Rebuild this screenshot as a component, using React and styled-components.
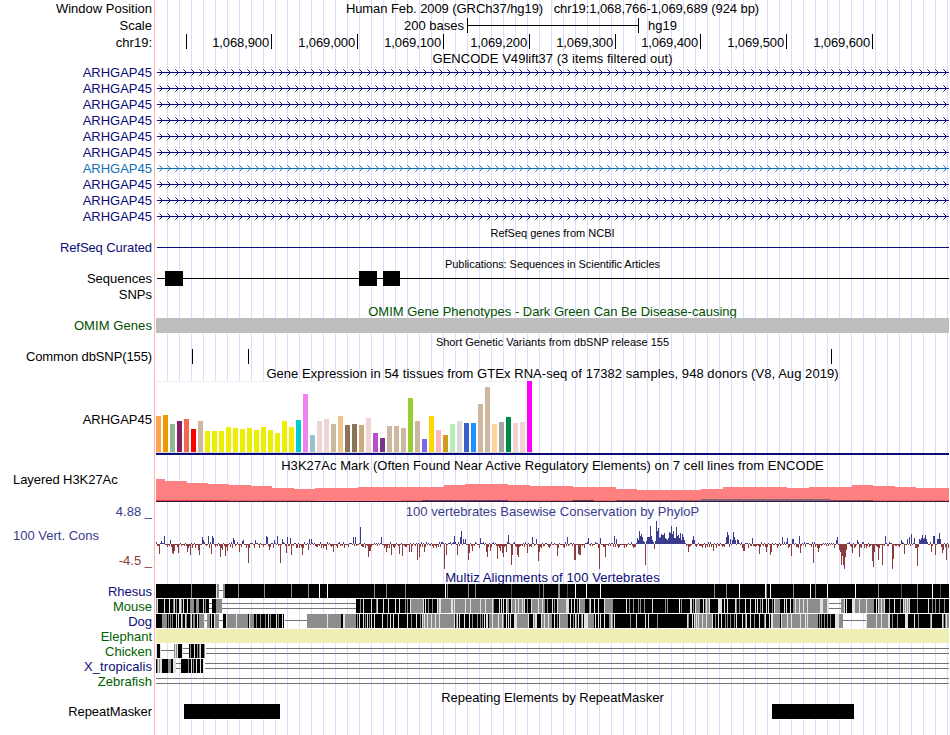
import React from "react";
import styled, { createGlobalStyle } from "styled-components";

const colors = {
    text: "#000",
    navy: "#0c0c78",
    blue: "#1470b4",
    green: "#005000",
    species: "#006000",
    up: "#3c3c8c",
    down: "#8c3c3c",
    clipped: "#ff00ff",
    gap: "#737373",
};

//first base of the window sits at this pixel, every plot starts here
const X0 = 156;
const PLOT_WIDTH = 793;

const GlobalStyle = createGlobalStyle`
    body {
        margin: 0;
        background: #fff;
        overflow: hidden;
    }
`;

const Browser = styled.main`
    width: 949px;
    height: 735px;
    overflow: hidden;
    font-family: "Liberation Sans", Arial, Helvetica, sans-serif;
    font-size: 13px;
    background-image:
        linear-gradient(#ffb4b4, #ffb4b4),
        repeating-linear-gradient(to right, transparent 0 11px, #dcdcff 11px 12px);
    background-size: 1px 100%, 793px 100%;
    background-position: 154px 0, 156px 0;
    background-repeat: no-repeat;
`;

const Row = styled.div`
    display: grid;
    grid-template-columns: 152px ${PLOT_WIDTH}px;
    column-gap: 4px;
    height: ${props=>props.$height}px;
`;

const Label = styled.div`
    display: flex;
    flex-direction: column;
    justify-content: ${props=>props.$top === undefined ? "center" : "flex-start"};
    align-items: ${props=>props.$left ? "flex-start" : "flex-end"};
    padding-top: ${props=>props.$top || (props.$low ? 2 : 0)}px;
    padding-left: ${props=>props.$left ? 13 : 0}px;
    box-sizing: border-box;
    height: ${props=>props.$height}px;
    line-height: 16px;
    color: ${props=>props.$color || colors.text};
    letter-spacing: ${props=>props.$spacing || 0}px;
    white-space: nowrap;
`;

const Title = styled.div`
    display: flex;
    justify-content: center;
    align-items: center;
    box-sizing: border-box;
    padding-top: ${({$drop = 1})=>$drop}px;
    line-height: 16px;
    font-size: ${props=>props.$small ? 11 : 13}px;
    color: ${props=>props.$color || colors.text};
    letter-spacing: ${props=>props.$spacing || 0}px;
    white-space: pre;
`;

const Plot = styled.svg`
    display: block;
    width: ${PLOT_WIDTH}px;
    height: ${props=>props.$height}px;
    shape-rendering: crispEdges;
`;

const Limit = styled.span`
    align-self: flex-end;
    margin-top: ${props=>props.$gap}px;
    color: ${colors.down};
`;

const ScaleBar = styled.div`
    display: flex;
    align-items: center;
    padding-left: 248px;
`;

const ScaleLine = styled.span`
    width: 170px;
    height: 15px;
    margin: 0 9px 1px 3px;
    border: solid #000;
    border-width: 0 1px;
    background: linear-gradient(#000, #000) 0 7px / 100% 1px no-repeat;
`;

const Ruler = styled.div`
    display: flex;
`;

const Tick = styled.span`
    box-sizing: border-box;
    width: ${props=>props.$width}px;
    height: 15px;
    padding-right: 2px;
    border-right: 1px solid #000;
    line-height: 17px;
    text-align: right;
    letter-spacing: -0.12px;
`;

const Elephant = styled.div`
    height: 14px;
    background: #f0f0b4;
`;

const OmimBar = styled.div`
    height: 15px;
    background: #bebebe;
`;

const genes = [0, 1, 2, 3, 4, 5, 6, 7, 8, 9].map(i=>i === 6 ? colors.blue : colors.navy);

const ticks = [[186, ""], [271, "1,068,900"], [357, "1,069,000"], [443, "1,069,100"], [529, "1,069,200"],
    [615, "1,069,300"], [700, "1,069,400"], [786, "1,069,500"], [872, "1,069,600"]];

const yellow = (heights)=>heights.map(h=>[h, "#eeee00"]);

const tissues = [
    [36, "#ffa54f"], [37, "#ee9a00"], [28, "#8fbc8f"], [31, "#8b1c62"], [33, "#ee6a50"], [23, "#ff0000"], [31, "#cdb79e"],
    ...yellow([21, 21, 21, 25, 24, 23, 24, 22, 25, 22, 19, 31, 25]),
    [32, "#00cdcd"], [58, "#ee82ee"], [17, "#9ac0cd"], [31, "#eed5d2"], [33, "#eed5d2"], [28, "#cdb79e"], [36, "#eec591"],
    [27, "#8b7355"], [28, "#8b7355"], [27, "#cdaa7d"], [34, "#eed5d2"], [19, "#b452cd"], [14, "#7a378b"],
    [26, "#cdb79e"], [26, "#cdb79e"], [24, "#cdb79e"], [54, "#9acd32"], [31, "#cdb79e"], [13, "#7a67ee"],
    [36, "#ffd700"], [22, "#ffb6c1"], [17, "#cd9b1d"], [28, "#b4eeb4"], [31, "#d9d9d9"], [29, "#3a5fcd"],
    [29, "#1e90ff"], [48, "#cdb79e"], [65, "#cdb79e"], [28, "#ffd39b"], [30, "#a6a6a6"], [35, "#008b45"],
    [29, "#eed5d2"], [30, "#eed5d2"], [71, "#ff00ff"],
];

//[start, top] of each signal step
const h3k27ac = [[156, 479], [165, 481], [187, 483], [208, 484], [229, 485], [251, 486], [272, 488], [294, 489],
    [315, 488], [358, 487], [444, 485], [465, 484], [508, 485], [530, 486], [573, 487], [616, 489], [637, 490],
    [701, 489], [723, 487], [787, 488], [809, 487], [852, 485], [873, 486], [895, 487], [916, 488]];

//[start, end, top, color] of the weaker cell lines at the foot of the signal
const weakSignals = [[156, 229, 500, "#e63c46"], [229, 315, 500, "#f5695a"], [401, 422, 500, "#f5695a"],
    [422, 508, 500, "#6e3c6e"], [508, 573, 500, "#f5695a"], [573, 594, 500, "#5a3c3c"], [594, 616, 500, "#f5695a"],
    [616, 680, 500, "#7d4b46"], [680, 701, 500, "#a05a5a"], [701, 830, 499, "#80647d"], [830, 873, 500, "#7d4b46"],
    [873, 949, 500, "#f5695a"]];

const peaks = {
    159: -10, 161: 3, 164: 8, 170: 4, 172: -9, 173: -10, 174: -7, 178: -9, 187: -8, 190: -11, 198: -6, 199: -11,
    202: 7, 203: 4, 208: 8, 211: -10, 212: 8, 213: 6, 220: -13, 222: -6, 225: -12, 227: -7, 233: 6, 234: 4, 239: -8,
    242: 3, 243: 4, 248: -19, 255: 4, 266: 8, 267: 7, 269: -6, 274: 4, 277: 8, 280: -19, 282: 5, 286: -9, 287: 7,
    290: 6, 291: -11, 302: -11, 308: -6, 309: 5, 311: 5, 326: -6, 333: -8, 353: 7, 355: 7, 360: 17, 368: -13,
    369: -7, 370: -7, 381: 7, 386: -8, 391: -11, 399: -10, 402: -12, 409: -8, 411: -8, 417: -16, 419: -13, 424: -8,
    444: -25, 446: -11, 454: 8, 457: -11, 460: 7, 461: 13, 463: 5, 465: 5, 468: -16, 469: -9, 472: -7, 480: 6,
    486: -8, 487: -13, 490: -7, 497: -15, 500: -7, 502: -9, 503: -13, 506: -8, 508: 9, 511: -21, 512: -11, 517: -11,
    518: -13, 527: -9, 532: 7, 536: 5, 538: -17, 539: -8, 557: -12, 567: 7, 574: -16, 575: -16, 578: -10, 579: -11,
    580: -11, 588: 6, 599: -25, 600: 6, 605: -13, 614: 8, 616: 5, 637: 6, 638: 4, 639: 13, 640: 8, 641: 10, 642: 7,
    643: 3, 644: 2, 645: -21, 646: 3, 647: 7, 648: 7, 649: 7, 650: 18, 651: 8, 652: 4, 653: 2, 654: -5, 655: 3,
    656: 23, 657: 13, 658: 16, 659: 6, 660: 7, 661: 10,
    662: 9, 663: 9, 664: 11, 665: 6, 666: 5, 667: 4, 668: 6, 669: 12, 670: 11, 671: 18, 672: 10, 673: 13, 674: 6,
    675: 6, 676: 17, 677: 8, 678: 9, 679: 6, 680: 11, 681: 4, 682: 10, 683: 7, 684: 4, 688: -8, 692: 4, 693: 8,
    694: 4, 713: -7, 726: 7, 727: 12, 728: 9, 730: 5, 732: 4, 733: 12, 734: 7, 735: 4, 737: 5, 738: 4, 743: -7,
    744: -7, 752: 6, 759: -10, 766: -8, 770: -11, 771: -8, 782: 7, 787: 6, 791: -12, 792: 5, 793: 5, 799: 8,
    800: -9, 813: -19, 818: -8, 836: 4, 837: 7, 839: -6, 840: -8, 841: -21, 842: -12, 843: -21, 844: -25, 845: -13,
    846: -6, 852: -9, 857: 4, 859: -13, 872: -17, 873: -23, 874: -8, 878: -16, 882: -21, 885: 8, 892: -25,
    893: -15, 901: 4, 904: -10, 907: 5, 909: 7, 911: 10, 914: 6, 917: -22, 919: 5, 920: 4, 921: 6, 922: 9, 923: 5,
    924: 6, 925: 9, 926: 5, 931: -8, 933: 8, 934: 8, 935: -11, 937: 5, 938: 5, 939: 11, 940: 5, 942: -9, 943: -6,
    946: -16,
};

//[start, runs]; K = match, D = dark, G = partial, L = weak, W = break
const rhesus = [[156, "K35G1K24L1G2"], [223, "G2K13G1K25G1K26G1K16G1K10W1K7W1K46G1K11G1K18G1K39W1K1G1K20G1K6G1K35D1K27D1K3G1K14G2K7D1K7W1K10W1K13W1K113G1K11G1K12W1K25W1G1K3W1K22G1K16W1K4G1K11W1K27W1K22G1K22D1K15G1K14W1K7D1K8"]];

const mouse = [
    [156, "G1L1K6L1K4L1K3G1L1K1G1K2L2G1K1L1K3L1K2G4K2G3K4L1K1G1K3"],
    [212, "K4G6"],
    [356, "K4G1K2L1K7L1K4G1L1K5L1K4L1K6L1K3L1K5G1K1G1K2L1G12L1K1L1K2G1K3G1K4L1G1L2"],
    [441, "G10L2G1L1G10L1G4L1G9L1G4L1G6L1G1K5L1K1L1K1L1K2L1G2K2L1G3L1G2L1G3L1G1L1K2G1K3L1G6L1G3L1G2K2G1K4L1K1G1K2L1G8L3K2L1K2L1K2G1K1L1G5K4G1L1K3L1K3L1K5L1G8K13L1K2G1K3G1K4G1K1G1K3G1K7L1K12G1K1G1K11"],
    [680, "K1G1K8L2K1G1K1L1G4K3L1K1G1L1G2L1K8L4K2L1K2L1K7L1G1K2G1K5L1K4L1K4L1K1L1K2G1K1L1K3L1K1L1K3G1K1L1G5K4L1K1L1K3L1K2G2L1G3L1G3L1G3L1G12L3G4L2"],
    [841, "G3L1K1L1K5L3G4L1G6L1G7K2L1K1L1G2L1G2L1K4G1K4L1K5G1K2L1G1L1G1L1G1L1K7G1K10L1K3G1K2G1K3G1K4G1K4"],
];

const dog = [
    [156, "K6G5K1G1K1G1K1G1K3L1K1L1K2L1G1K2L1G1K3G1L1K1G2K2L1K1G5L1"],
    [207, "G3K1L1K2L1G4"],
    [223, "K3L1G9L1G11K1L1G4K2G1K3G1K4G1K2L1K1G1K5L1K1G1K3L1K1"],
    [307, "G20L1G13K2L2G11K1G1K1L1K3L1K1G1K1L1K1G1K1L1K2L1K7L1K4G1K2L1K2L1K4L1K8L1K3G1K4L1K3G1K1L1G1L1G2L1G3L1G3L1G3L1G14L1K1G1L1K1L1K4L1K4L1K2G1K4G1K2G1K1G1K1L1K1L2K1G3L1G5L1G3L1G1K2L1K1L1K1L1K3L1L2G11L1K4L1G1L1"],
    [536, "L1K4L1G2L1G3L1G3K2L1K2G1K1L1G8K2L1K2G1K1L1G1K1L1K2G1L1K1L4G6K1L1K2L1K1L1K3L1K4G2L1G1K1L1K15G1K5L1K8L1K2L1K8G1K23"],
    [680, "K7L1G1K3L1K1L1G1L1G1L1G3L1G3L1G5L1K2G1K2L1K2L1K3G1K1G1K2G1K3G1K1L1K5L1K2G1L1K3L1K3G1K4L1K4G1L1K3L1K1L1L1G7K1L1G5L1G3L1G8L1G4L1G1L1G10K1G1K1G1K2G1K2G1K2G1K4L4G4"],
    [866, "L1G9L1G4L1G6L1L1K2G1K4G1K7L3K6L1K3G1K11G1L1K10L1G1K1G1L1G2"],
];

const chicken = [[156, "L1K3L1"], [174, "G1L1G1L1K4L1"], [189, "K1G1K3L1K2G1K1G1L1K3G1"]];

const tropicalis = [[156, "K1G1L1G1L2K6G3K2L3"], [181, "K7G1K2L1K1G1K2L1K3L1K2L1"]];

const shades = { K: "#000", D: "#505050", G: "#8c8c8c", L: "#e1e1e1", W: "#fff" };

//small score for the bases without a notable peak
function noise(x) {
    const n = (x * 7919 + (x * x * 31) % 977) % 23;
    if (n < 7) return -1;
    if (n < 11) return -2;
    if (n < 14) return -3;
    if (n < 16) return -4;
    if (n < 21) return 1;
    return 2;
}

/**
 * GeneLine draws one transcript as an intron line with the strand arrows.
 * @param {string} color - The color of the transcript.
 */
function GeneLine({color}) {
    const tips = [];
    const ends = [];
    for(let x = 3; x < PLOT_WIDTH; x += 8) {
        ends.push(`M${x} 5h1v1h-1zM${x} 11h1v1h-1z`);
        tips.push(`M${x + 1} 6h1v1h-1zM${x + 2} 7h1v1h-1zM${x + 2} 9h1v1h-1zM${x + 1} 10h1v1h-1z`);
    }
    return(
        <Plot $height={16}>
            <rect x={1} y={8} width={PLOT_WIDTH - 1} height={1} fill={color}/>
            <path d={tips.join("")} fill={color}/>
            <path d={ends.join("")} fill={color} fillOpacity={0.5}/>
        </Plot>
    );
}

/**
 * Blocks draws features as filled boxes, with an optional line running through them.
 */
function Blocks({items, line}) {
    return(
        <Plot $height={15}>
            {line && <rect x={1} y={7} width={PLOT_WIDTH - 1} height={1} fill={line}/>}
            {items.map(([from, to])=><rect key={from} x={from - X0} y={0} width={to - from} height={15}/>)}
        </Plot>
    );
}

function Expression() {
    return(
        <Plot $height={77}>
            <rect x={0} y={1} width={377} height={71} fill="#fff"/>
            <path d="M0 1h377v1h-376v70h-1z" fill="#f0f0f0"/>
            <rect x={0} y={72} width={377} height={1} fill="#d7d7d7"/>
            {tissues.map(([h, color], i)=><rect key={i} x={i * 7} y={72 - h} width={5} height={h} fill={color}/>)}
            <rect x={0} y={73} width={PLOT_WIDTH} height={2} fill={colors.navy}/>
        </Plot>
    );
}

function Histone() {
    return(
        <Plot $height={30}>
            {h3k27ac.map(([x, top], i)=>{
                const end = i + 1 < h3k27ac.length ? h3k27ac[i + 1][0] : 949;
                return <rect key={x} x={x - X0} y={top - 473} width={end - x} height={501 - top} fill="#ff8080"/>
            })}
            {weakSignals.map(([x, end, top, color])=>
                <rect key={x} x={x - X0} y={top - 473} width={end - x} height={501 - top} fill={color}/>
            )}
            <rect x={0} y={28} width={PLOT_WIDTH} height={1} fill="#32143c"/>
        </Plot>
    );
}

function Conservation() {
    const bars = [];
    for(let x = X0; x < 949; x++) {
        const v = peaks[x] || noise(x);
        bars.push(<rect key={x} x={x - X0} y={v > 0 ? 25 - v : 25} width={1} height={Math.abs(v)} fill={v > 0 ? colors.up : colors.down}/>);
        if(v === -25) {
            bars.push(<rect key={"c" + x} x={x - X0} y={48} width={1} height={2} fill={colors.clipped}/>);
        }
    }
    return <Plot $height={50}>{bars}</Plot>;
}

/**
 * Alignment draws one species row of the multiple alignment.
 * @param {array} parts - The aligned parts as [start, runs].
 * @param {array} single - The gaps drawn with one line, as [start, end].
 * @param {array} double - The gaps drawn with two lines, as [start, end].
 */
function Alignment({parts = [], single = [], double = []}) {
    return(
        <Plot $height={14}>
            {parts.map(([start, runs])=>{
                let x = start - X0;
                return runs.match(/[A-Z]\d+/g).map(run=>{
                    const width = Number(run.slice(1));
                    x += width;
                    return <rect key={x} x={x - width} y={0} width={width} height={14} fill={shades[run[0]]}/>
                });
            })}
            {single.map(([from, to])=><rect key={from} x={from - X0} y={6} width={to - from} height={1} fill={colors.gap}/>)}
            {double.map(([from, to])=>
                <path key={from} d={`M${from - X0} 4h${to - from}v1h${from - to}zm0 5h${to - from}v1h${from - to}z`} fill={colors.gap}/>
            )}
        </Plot>
    );
}

function TitleRow({height = 16, label, children, ...props}) {
    return(
        <Row $height={height}>
            {label || <span/>}
            <Title {...props}>{children}</Title>
        </Row>
    );
}

function TrackRow({height = 15, name, color, spacing, children}) {
    return(
        <Row $height={height}>
            <Label $color={color} $height={height} $low={height > 15} $spacing={spacing}>{name}</Label>
            {children}
        </Row>
    );
}

export default function App() {
    return(
        <Browser>
            <GlobalStyle/>

            <Row $height={17}>
                <Label $height={17}>Window Position</Label>
                <Title $drop={0} $spacing={-0.08}>Human Feb. 2009 (GRCh37/hg19)   chr19:1,068,766-1,069,689 (924 bp)</Title>
            </Row>
            <Row $height={17}>
                <Label $height={17}>Scale</Label>
                <ScaleBar>200 bases<ScaleLine/>hg19</ScaleBar>
            </Row>
            <Row $height={17}>
                <Label $height={17}>chr19:</Label>
                <Ruler>
                    {ticks.map(([x, name], i)=><Tick key={x} $width={x + 1 - (i ? ticks[i - 1][0] + 1 : X0)}>{name}</Tick>)}
                </Ruler>
            </Row>

            <TitleRow height={13} $drop={0} $spacing={0.04}>GENCODE V49lift37 (3 items filtered out)</TitleRow>
            {genes.map((color, i)=>
                <TrackRow key={i} height={16} name="ARHGAP45" color={color}><GeneLine color={color}/></TrackRow>
            )}

            <TitleRow $small>RefSeq genes from NCBI</TitleRow>
            <TrackRow name="RefSeq Curated" color={colors.navy} spacing={-0.08}>
                <Blocks items={[]} line={colors.navy}/>
            </TrackRow>

            <TitleRow $small $spacing={-0.06}>Publications: Sequences in Scientific Articles</TitleRow>
            <TrackRow name="Sequences"><Blocks items={[[165, 183], [359, 377], [383, 400]]} line="#000"/></TrackRow>
            <TrackRow height={16} name="SNPs"/>

            <TitleRow $drop={2} $color={colors.green}>OMIM Gene Phenotypes - Dark Green Can Be Disease-causing</TitleRow>
            <TrackRow name="OMIM Genes" color={colors.green} spacing={0.08}><OmimBar/></TrackRow>

            <TitleRow $small>Short Genetic Variants from dbSNP release 155</TitleRow>
            <TrackRow name="Common dbSNP(155)" spacing={-0.11}>
                <Blocks items={[[192, 193], [248, 249], [831, 832]]}/>
            </TrackRow>

            <TitleRow $drop={2} $spacing={0.055}>Gene Expression in 54 tissues from GTEx RNA-seq of 17382 samples, 948 donors (V8, Aug 2019)</TitleRow>
            <TrackRow height={77} name="ARHGAP45"><Expression/></TrackRow>

            <TitleRow $spacing={0.06}>H3K27Ac Mark (Often Found Near Active Regulatory Elements) on 7 cell lines from ENCODE</TitleRow>
            <Row $height={30}>
                <Label $left $height={14} $spacing={-0.06}>Layered H3K27Ac</Label>
                <Histone/>
            </Row>

            <TitleRow $color={colors.up} $spacing={0.03} label={<Label $low $color={colors.up} $height={16}>4.88 _</Label>}>
                100 vertebrates Basewise Conservation by PhyloP
            </TitleRow>
            <Row $height={50}>
                <Label $left $top={9} $height={50} $color={colors.up}>
                    100 Vert. Cons
                    <Limit $gap={9}>-4.5 _</Limit>
                </Label>
                <Conservation/>
            </Row>

            <TitleRow height={15} $color={colors.navy} $spacing={0.1}>Multiz Alignments of 100 Vertebrates</TitleRow>
            <TrackRow name="Rhesus" color={colors.navy}><Alignment parts={rhesus} single={[[219, 223]]}/></TrackRow>
            <TrackRow name="Mouse" color={colors.species}>
                <Alignment parts={mouse} double={[[209, 212], [222, 356], [829, 841]]}/>
            </TrackRow>
            <TrackRow name="Dog" color={colors.navy}>
                <Alignment parts={dog} single={[[205, 207], [219, 223], [285, 307], [843, 866]]}/>
            </TrackRow>
            <TrackRow name="Elephant" color={colors.species}><Elephant/></TrackRow>
            <TrackRow name="Chicken" color={colors.species}>
                <Alignment parts={chicken} single={[[161, 174]]} double={[[183, 189], [206, 949]]}/>
            </TrackRow>
            <TrackRow name="X_tropicalis" color={colors.navy} spacing={0.06}>
                <Alignment parts={tropicalis} double={[[176, 181], [205, 949]]}/>
            </TrackRow>
            <TrackRow name="Zebrafish" color={colors.species}><Alignment double={[[156, 949]]}/></TrackRow>

            <TitleRow height={15}>Repeating Elements by RepeatMasker</TitleRow>
            <TrackRow name="RepeatMasker" spacing={-0.06}><Blocks items={[[184, 280], [772, 854]]}/></TrackRow>
        </Browser>
    );
}
